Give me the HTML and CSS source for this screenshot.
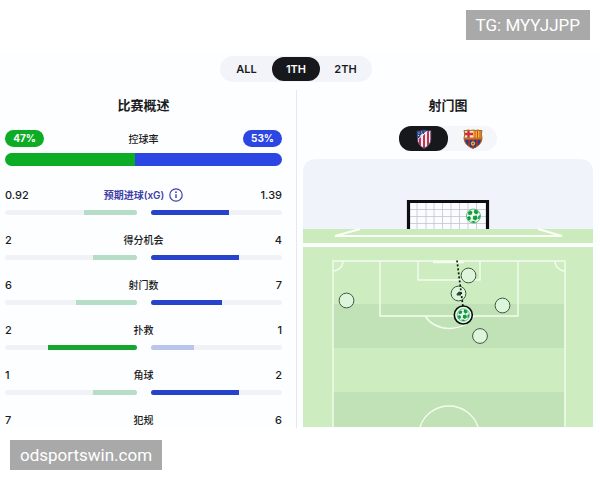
FILE: index.html
```html
<!DOCTYPE html>
<html lang="zh">
<head>
<meta charset="utf-8">
<meta name="viewport" content="width=device-width, initial-scale=1">
<title>比赛概述</title>
<link rel="stylesheet" href="styles.css">
</head>
<body>
<a class="tag tag-top" href="#tg">TG: MYYJJPP</a>
<main class="panel">
  <nav class="tabs">
    <button class="tab" type="button">ALL</button>
    <button class="tab active" type="button">1TH</button>
    <button class="tab" type="button">2TH</button>
  </nav>
  <div class="columns">
    <section class="overview">
      <h2>比赛概述</h2>
      <div class="possession">
        <span class="pill home">47%</span>
        <span>控球率</span>
        <span class="pill away">53%</span>
      </div>
      <div class="split"><span class="home" style="width:47%"></span><span class="away"></span></div>
      <div class="stats">
        <div class="stat">
          <div class="line"><span class="num">0.92</span>
            <span class="name xg">预期进球(xG)
              <svg class="info" viewBox="0 0 14 14"><circle cx="7" cy="7" r="6.2" fill="none" stroke="currentColor" stroke-width="1.2"/><path d="M7 6.3V10" stroke="currentColor" stroke-width="1.4"/><circle cx="7" cy="4.2" r=".9" fill="currentColor"/></svg>
            </span><span class="num">1.39</span></div>
          <div class="bars"><div class="bar left"><i style="width:40%"></i></div><div class="bar right lead"><i style="width:60%"></i></div></div>
        </div>
        <div class="stat">
          <div class="line"><span class="num">2</span><span class="name">得分机会</span><span class="num">4</span></div>
          <div class="bars"><div class="bar left"><i style="width:33%"></i></div><div class="bar right lead"><i style="width:67%"></i></div></div>
        </div>
        <div class="stat">
          <div class="line"><span class="num">6</span><span class="name">射门数</span><span class="num">7</span></div>
          <div class="bars"><div class="bar left"><i style="width:46%"></i></div><div class="bar right lead"><i style="width:54%"></i></div></div>
        </div>
        <div class="stat">
          <div class="line"><span class="num">2</span><span class="name">扑救</span><span class="num">1</span></div>
          <div class="bars"><div class="bar left lead"><i style="width:67%"></i></div><div class="bar right"><i style="width:33%"></i></div></div>
        </div>
        <div class="stat">
          <div class="line"><span class="num">1</span><span class="name">角球</span><span class="num">2</span></div>
          <div class="bars"><div class="bar left"><i style="width:33%"></i></div><div class="bar right lead"><i style="width:67%"></i></div></div>
        </div>
        <div class="stat">
          <div class="line"><span class="num">7</span><span class="name">犯规</span><span class="num">6</span></div>
        </div>
      </div>
    </section>
    <section class="shots">
      <h2>射门图</h2>
      <div class="teams">
        <button class="team active" type="button" aria-label="Atlético Madrid">
          <svg class="crest" viewBox="0 0 20 20">
            <clipPath id="atm"><path d="M3 2Q6.500 2.500 10 1Q13.500 2.500 17 1.500V10Q17 16 10 19.500Q3.500 16 3.500 10Z"/></clipPath>
            <g clip-path="url(#atm)"><rect width="20" height="20" fill="#f4eef3"/>
            <path d="M6 7V20M10 5V20M14 2V20M17.500 0V20" stroke="#c9304a" stroke-width="2"/>
            <path d="M0 0H15L3 12H0Z" fill="#30468c"/>
            <path d="M16 0L3 11" stroke="#fff" stroke-width="1"/>
            <path d="M6 7L8.500 4L9.500 6.500L7 8Z" fill="#e9edf5"/><g fill="#fff"><circle cx="5" cy="4" r=".6"/><circle cx="7.500" cy="3" r=".6"/><circle cx="11" cy="3" r=".6"/><circle cx="4.500" cy="6.500" r=".6"/></g></g>
            <path d="M3 2Q6.500 2.500 10 1Q13.500 2.500 17 1.500V10Q17 16 10 19.500Q3.500 16 3.500 10Z" fill="none" stroke="#35406f" stroke-width=".8"/>
          </svg>
        </button>
        <button class="team" type="button" aria-label="FC Barcelona">
          <svg class="crest" viewBox="0 0 20 20">
            <clipPath id="fcb"><path d="M1 1.500Q3 2 5 1Q7 2 10 1Q13 2 15 1Q17 2 19 1.500Q17.500 5 19 9Q19 16 10 19.500Q1 16 1 9Q2.500 5 1 1.500Z"/></clipPath>
            <g clip-path="url(#fcb)"><rect width="20" height="20" fill="#a12a45"/>
            <rect width="10" height="9" fill="#f3e6d8"/><path d="M5.500 0V9M0 5H10" stroke="#d62c35" stroke-width="2.400"/>
            <rect x="10" width="10" height="9" fill="#f0b62c"/><path d="M12 0V9M14.500 0V9M17 0V9" stroke="#d8482f" stroke-width="1"/>
            <path d="M4 11V20M8 11V20M12 11V20M16 11V20" stroke="#283c80" stroke-width="2"/>
            <rect y="8.500" width="20" height="2" fill="#b9742f"/><circle cx="10" cy="14.500" r="2.200" fill="#dfad3a"/><circle cx="10" cy="14.500" r=".8" fill="#6b3e22"/></g>
            <path d="M1 1.500Q3 2 5 1Q7 2 10 1Q13 2 15 1Q17 2 19 1.500Q17.500 5 19 9Q19 16 10 19.500Q1 16 1 9Q2.500 5 1 1.500Z" fill="none" stroke="#9a6a25" stroke-width="1"/>
          </svg>
        </button>
      </div>
      <svg class="pitch" viewBox="0 0 290 268" role="img" aria-label="射门图">
        <defs>
          <g id="ball"><circle r="7" fill="#e9faee" stroke="#25a34e" stroke-width=".7"/>
            <g fill="#129c3c"><path d="M-1.500 -2L1.800 -2.500L3 .5L.5 2.500L-2 1Z" transform="translate(1.300 2)"/><path d="M-5.500 -3.500L-3 -5.500L-1 -4L-2 -1.300L-5 -1Z"/><path d="M1 -6.500L4 -5.500L5 -3L2.500 -1.500L.3 -3.500Z"/><path d="M-6.500 1L-4 0L-2.500 2L-3.500 4.500L-5.500 4Z"/><path d="M4.800 0L6.800 -1L6 3L4.500 3Z"/><path d="M-2.500 5.500L0 5L2.500 6L0 7Z"/></g></g>
        </defs>
        <path d="M0 70V14Q0 0 14 0H276Q290 0 290 14V70Z" fill="#f0f3fa"/>
        <rect x="105" y="42" width="80" height="28" fill="#fbfcff"/>
        <path d="M114 43V70M123 43V70M131 43V70M139.500 43V70M148 43V70M156.500 43V70M165 43V70M173.500 43V70M107 50.500H183M107 57.500H183M107 64.500H183" stroke="#b9bdc8" stroke-width=".7"/>
        <path d="M105.500 70V42.500H184.500V70" fill="none" stroke="#0c0e12" stroke-width="3.200"/>
        <use href="#ball" x="170.500" y="57"/>
        <rect y="70" width="290" height="14" fill="#cbebbd"/>
        <path d="M57 70L32 77H259L235 70" fill="none" stroke="#fbfff8" stroke-width="2"/>
        <rect y="84" width="290" height="4" fill="#fdfffc"/>
        <rect y="88" width="290" height="180" fill="#cdecbf"/>
        <path d="M30 145H262V189H30ZM30 233H262V268H30Z" fill="#c1e2b7"/>
        <g fill="none" stroke="#f4fcef" stroke-width="1.400">
          <path d="M30 268V102H262V268M77 102V157H215V102M115 102V121H177V102M122 157Q130 169 146 169.500Q164 169 171 157M30 112A10 10 0 0 0 40 102M252 102A10 10 0 0 0 262 112"/>
          <path d="M117 268A30.500 30.500 0 0 1 175 268"/>
          <path d="M130 103H161" stroke-width="2.500"/>
        </g>
        <g fill="#ddf5da" stroke="#3c5b42" stroke-width="1">
          <circle cx="165.500" cy="116.500" r="7.400"/><circle cx="155.500" cy="134.500" r="7.400"/><circle cx="43.500" cy="141.500" r="7.400"/><circle cx="199.500" cy="146.500" r="7.400"/><circle cx="177" cy="177" r="7.400"/>
        </g>
        <path d="M153.500 135L156 132.500L158 133V136.500L154 136.500Z" fill="#244b31"/>
        <path d="M154 101.500L160 148" stroke="#101612" stroke-width="1.700" stroke-dasharray="2 2"/>
        <circle cx="160.300" cy="156" r="9" fill="#eafaf0" stroke="#0b100d" stroke-width="1.600"/>
        <use href="#ball" transform="translate(160.300 156) scale(.88)"/>
      </svg>
    </section>
  </div>
</main>
<a class="tag tag-bottom" href="#site">odsportswin.com</a>
</body>
</html>
```
FILE: styles.css
```css
* { box-sizing: border-box; }
body {
  margin: 0;
  padding-top: 52px;
  background: #fff;
  color: #191b20;
  font: 500 11px/16px Inter, "Noto Sans CJK SC", sans-serif;
}
button { border: 0; padding: 0; background: none; color: inherit; font: inherit; }
.panel { background: #fdfeff; padding-top: 4px; }
.tabs {
  display: grid;
  grid-template-columns: 1fr 48px 1fr;
  width: 152px;
  height: 26px;
  margin: 0 auto;
  padding: 1px;
  transform: translateX(-4px);
  border-radius: 13px;
  background: #f3f4f9;
}
.tab { border-radius: 12px; font-weight: 600; }
.active { background: #17181b; color: #fff; }
.columns { display: grid; grid-template-columns: 297fr 303fr; margin-top: 8px; }
.overview { padding: 5px 14px 0 5px; border-right: 1px solid #e6e7ef; }
.shots { padding: 5px 7px 0 6px; }
h2 { margin: 0; font-size: 13px; line-height: 20px; font-weight: 700; text-align: center; }
.possession { display: flex; justify-content: space-between; align-items: center; margin-top: 15px; font-size: 10px; }
.pill { width: 39px; border-radius: 9px; color: #fff; font-weight: 700; line-height: 17px; text-align: center; }
.home { background: #0cad25; }
.away { background: #2b46e2; }
.split { display: flex; height: 13px; margin-top: 6px; border-radius: 7px; overflow: hidden; }
.split .away { flex: 1; }
.stats { display: grid; gap: 17px; margin-top: 21px; }
.line { display: grid; grid-template-columns: 1fr auto 1fr; }
.num:last-child { text-align: right; }
.name { font-size: 10px; }
.xg { display: flex; align-items: center; gap: 5px; color: #3e40a8; font-weight: 600; }
.info { width: 14px; height: 14px; }
.bars { display: grid; grid-template-columns: 1fr 1fr; gap: 14px; margin-top: 7px; }
.bar { display: flex; height: 5px; border-radius: 3px; overflow: hidden; background: #f1f2f5; }
.bar.left { justify-content: flex-end; }
.left i { background: #b6dec7; }
.right i { background: #b9c5ec; }
.left.lead i { background: #16a62f; }
.right.lead i { background: #2743cb; }
.teams {
  display: grid;
  grid-template-columns: 1fr 1fr;
  width: 98px;
  height: 25px;
  margin: 11px auto 8px;
  border-radius: 13px;
  background: #f5f6fa;
}
.team { display: grid; place-items: center; border-radius: 12px; }
.crest { width: 20px; height: 20px; }
.pitch { display: block; width: 100%; }
.tag {
  position: absolute;
  padding: 0 10px;
  background: #a9a9a9;
  color: #fff;
  font: 400 17px/30px Roboto, sans-serif;
  text-decoration: none;
}
.tag-top { top: 10px; right: 10px; }
.tag-bottom { top: 440px; left: 10px; }
```
